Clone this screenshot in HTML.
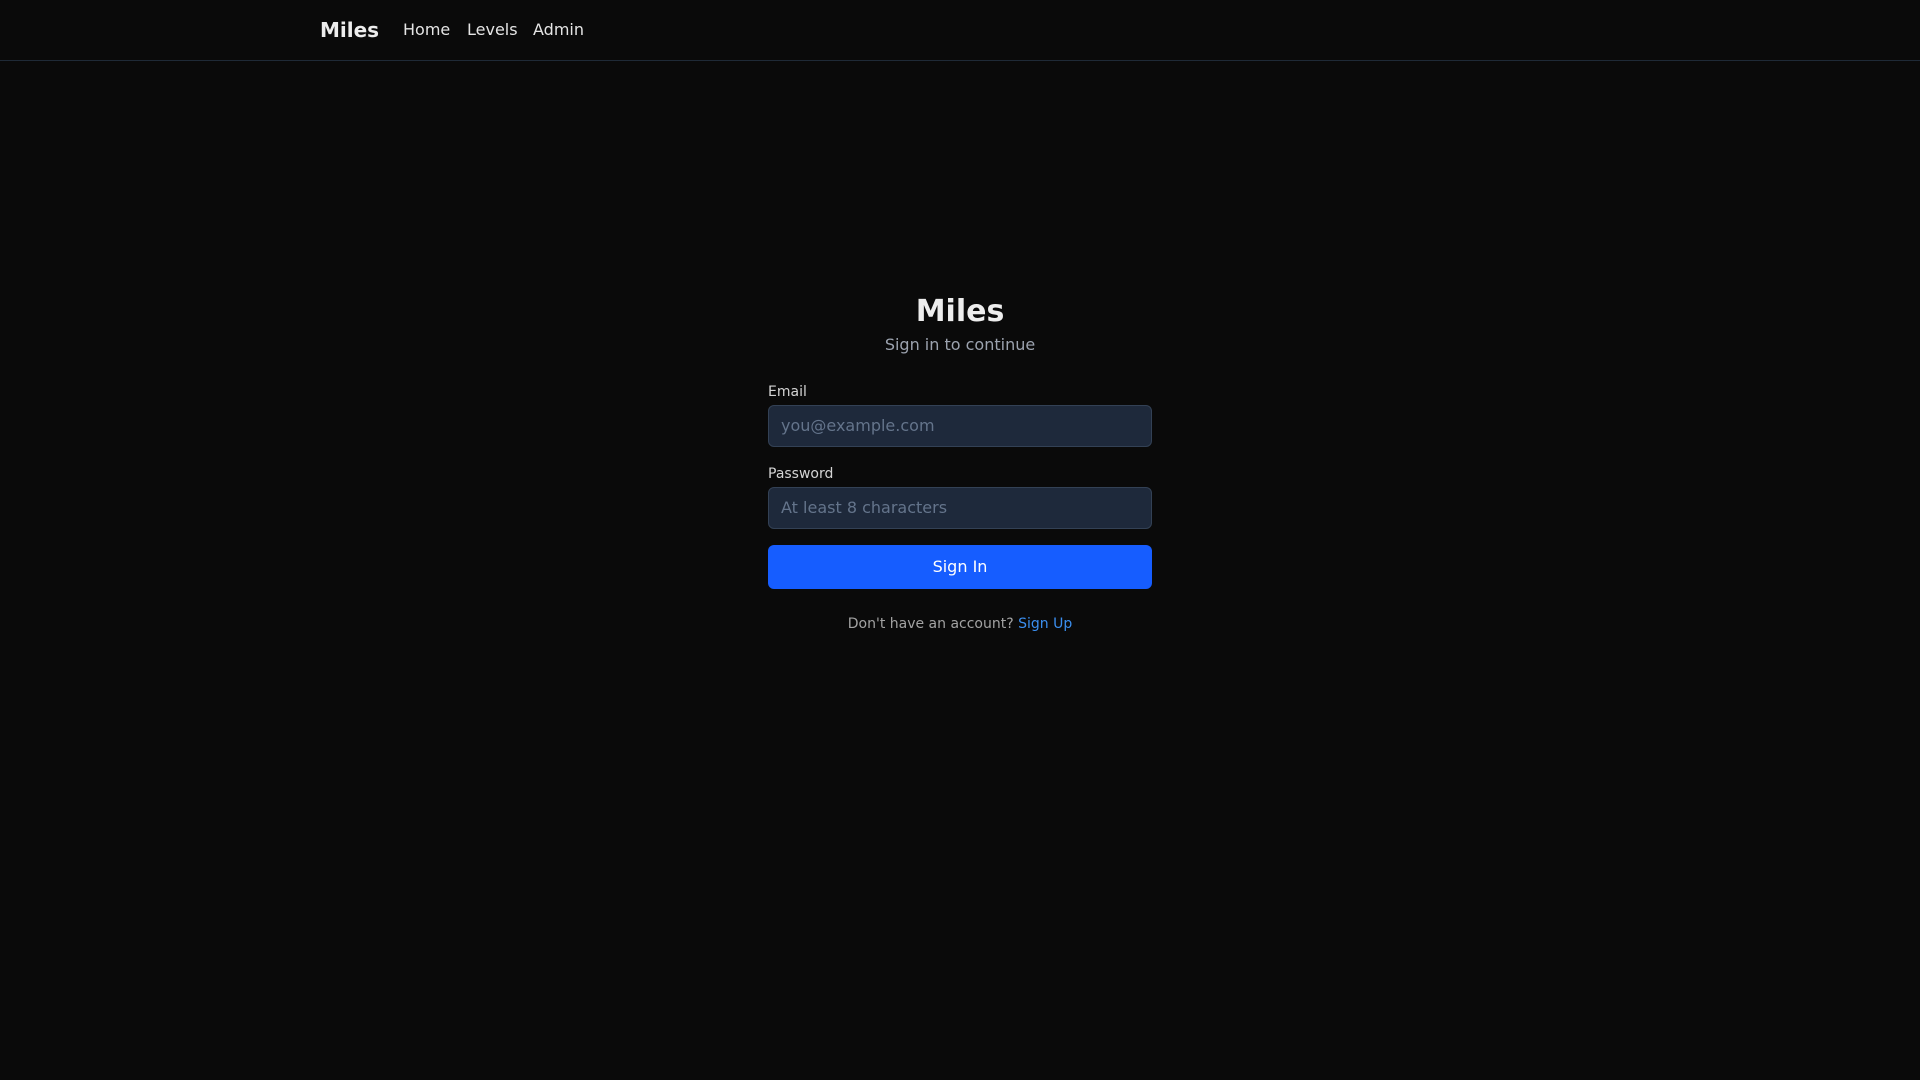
<!DOCTYPE html>
<html><head><meta charset="utf-8"><style>
*{box-sizing:border-box;margin:0;padding:0}
body{width:1920px;height:1080px;background:#0a0a0a;font-family:"DejaVu Sans","Liberation Sans",sans-serif;color:#ededed;position:relative;overflow:hidden}
.nav{position:absolute;left:0;top:0;width:1920px;height:61px;border-bottom:1px solid #1f2a37}
.nav span{position:absolute;top:19px;font-size:16px;line-height:22px;color:#e5e5e5}
.brand{font-weight:bold;font-size:20px!important;top:17px!important;line-height:26px!important;color:#ededed!important}
.t{position:absolute;left:768px;width:384px;text-align:center}
h1{font-size:30px;font-weight:bold;line-height:36px}
.sub{font-size:16px;color:#9ca3af}
.lbl{position:absolute;left:768px;font-size:14px;color:#d4d4d4}
.inp{position:absolute;left:768px;width:384px;height:42px;background:#1e293b;border:1px solid #334155;border-radius:6px;font-size:16px;color:#64748b;padding:0 12px;line-height:40px}
.btn{position:absolute;left:768px;top:545px;width:384px;height:44px;background:#165dff;border-radius:6px;color:#fff;font-size:16px;text-align:center;line-height:44px}
.ft{font-size:14px;color:#a3a3a3}
.ft a{color:#3b8ff0;text-decoration:none}
</style></head><body>
<div class="nav">
<span class="brand" style="left:320px">Miles</span>
<span style="left:403px">Home</span>
<span style="left:467px">Levels</span>
<span style="left:533px">Admin</span>
</div>
<div class="t" style="top:294px"><h1>Miles</h1></div>
<div class="t sub" style="top:335px">Sign in to continue</div>
<div class="lbl" style="top:384px">Email</div>
<div class="inp" style="top:405px">you@example.com</div>
<div class="lbl" style="top:466px">Password</div>
<div class="inp" style="top:487px">At least 8 characters</div>
<div class="btn">Sign In</div>
<div class="t ft" style="top:616px">Don't have an account? <a>Sign Up</a></div>
</body></html>
